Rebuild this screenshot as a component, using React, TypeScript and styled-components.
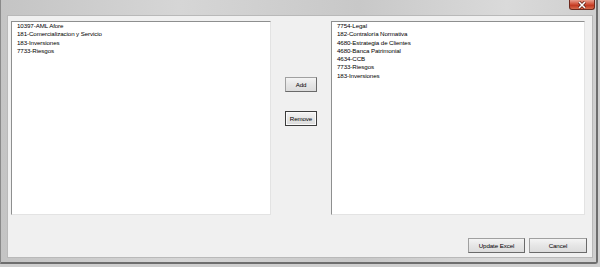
import { createGlobalStyle, styled } from "styled-components";

const GlobalStyle = createGlobalStyle`
  html, body {
    margin: 0;
    padding: 0;
    background: #cfcfcf;
  }
  body {
    font-family: "Liberation Sans", Arial, sans-serif;
  }
`;

const leftItems = [
  "10397-AML Afore",
  "181-Comercializacion y Servicio",
  "183-Inversiones",
  "7733-Riesgos",
];

const rightItems = [
  "7754-Legal",
  "182-Contraloría Normativa",
  "4680-Estrategia de Clientes",
  "4680-Banca Patrimonial",
  "4634-CCB",
  "7733-Riesgos",
  "183-Inversiones",
];

const App = () => {
  return (
    <>
      <GlobalStyle />
      <S.Window>
        <S.TitleBar>
          <S.CloseButton>
            <svg width="12" height="8" viewBox="0 0 12 8">
              <path d="M3 1 L9 7 M9 1 L3 7" stroke="#5a1a10" strokeWidth="3" />
              <path d="M3 1 L9 7 M9 1 L3 7" stroke="#ffffff" strokeWidth="1.6" />
            </svg>
          </S.CloseButton>
        </S.TitleBar>
        <S.Client>
          <S.Lists>
            <S.ListBox $width={260}>
              {leftItems.map((item) => (
                <S.Item key={item}>{item}</S.Item>
              ))}
            </S.ListBox>
            <S.Middle>
              <S.Button $width={32}>Add</S.Button>
              <S.Button $width={32} $focused>
                Remove
              </S.Button>
            </S.Middle>
            <S.ListBox $width={254}>
              {rightItems.map((item) => (
                <S.Item key={item}>{item}</S.Item>
              ))}
            </S.ListBox>
          </S.Lists>
          <S.Footer>
            <S.Button $width={57}>Update Excel</S.Button>
            <S.Button $width={58}>Cancel</S.Button>
          </S.Footer>
        </S.Client>
      </S.Window>
    </>
  );
};

const S = {
  Window: styled.div`
    width: 595px;
    height: 262px;
    display: flex;
    flex-direction: column;
    background: linear-gradient(to right, #c4c4c4, #d6d6d6 30%, #c8c8c8 60%, #dadada 85%, #cfcfcf);
    border-left: 1px solid #8a8a8a;
    border-right: 2px solid #6e6e6e;
    border-bottom: 2px solid #6e6e6e;
    border-bottom-right-radius: 3px;
  `,
  TitleBar: styled.div`
    height: 15px;
    display: flex;
    justify-content: flex-end;
    align-items: flex-start;
    padding-right: 1px;
  `,
  CloseButton: styled.div`
    width: 26px;
    height: 10px;
    display: flex;
    align-items: center;
    justify-content: center;
    background: linear-gradient(to bottom, #e8a08f, #d2533b 45%, #c23a22 60%, #d76a4c);
    border: 1px solid #6d2a1e;
    border-top: none;
    border-radius: 0 0 3px 3px;
    box-sizing: border-box;
  `,
  Client: styled.div`
    flex: 1;
    margin: 0 3px 4px 6px;
    background: #f0f0f0;
    border: 1px solid #b9b9b9;
    padding: 5px 5px 4px 3px;
    display: flex;
    flex-direction: column;
  `,
  Lists: styled.div`
    display: flex;
    height: 194px;
  `,
  ListBox: styled.div<{ $width: number }>`
    width: ${({ $width }) => $width}px;
    box-sizing: border-box;
    background: #ffffff;
    border-top: 1px solid #8e8f8f;
    border-left: 1px solid #8e8f8f;
    border-right: 1px solid #e3e3e3;
    border-bottom: 1px solid #e3e3e3;
    padding: 0 5px;
  `,
  Item: styled.div`
    font-size: 6.2px;
    line-height: 8.3px;
    color: #000000;
    letter-spacing: -0.1px;
    white-space: nowrap;
  `,
  Middle: styled.div`
    width: 60px;
    display: flex;
    flex-direction: column;
    align-items: center;
    padding-top: 56px;
    gap: 19px;
    box-sizing: border-box;
  `,
  Button: styled.div<{ $width: number; $focused?: boolean }>`
    width: ${({ $width }) => $width}px;
    height: 15px;
    box-sizing: border-box;
    display: flex;
    align-items: center;
    justify-content: center;
    font-size: 6.2px;
    letter-spacing: -0.1px;
    color: #000000;
    background: linear-gradient(to bottom, #f4f4f4, #e6e6e6 50%, #dcdcdc);
    border: 1px solid ${({ $focused }) => ($focused ? "#3c3c3c" : "#a0a0a0")};
    border-right-color: ${({ $focused }) => ($focused ? "#3c3c3c" : "#6a6a6a")};
    border-bottom-color: ${({ $focused }) => ($focused ? "#3c3c3c" : "#6a6a6a")};
    box-shadow: ${({ $focused }) => ($focused ? "inset 0 0 0 1px #fafafa" : "none")};
  `,
  Footer: styled.div`
    margin-top: auto;
    display: flex;
    justify-content: flex-end;
    gap: 4px;
  `,
};

export default App;
